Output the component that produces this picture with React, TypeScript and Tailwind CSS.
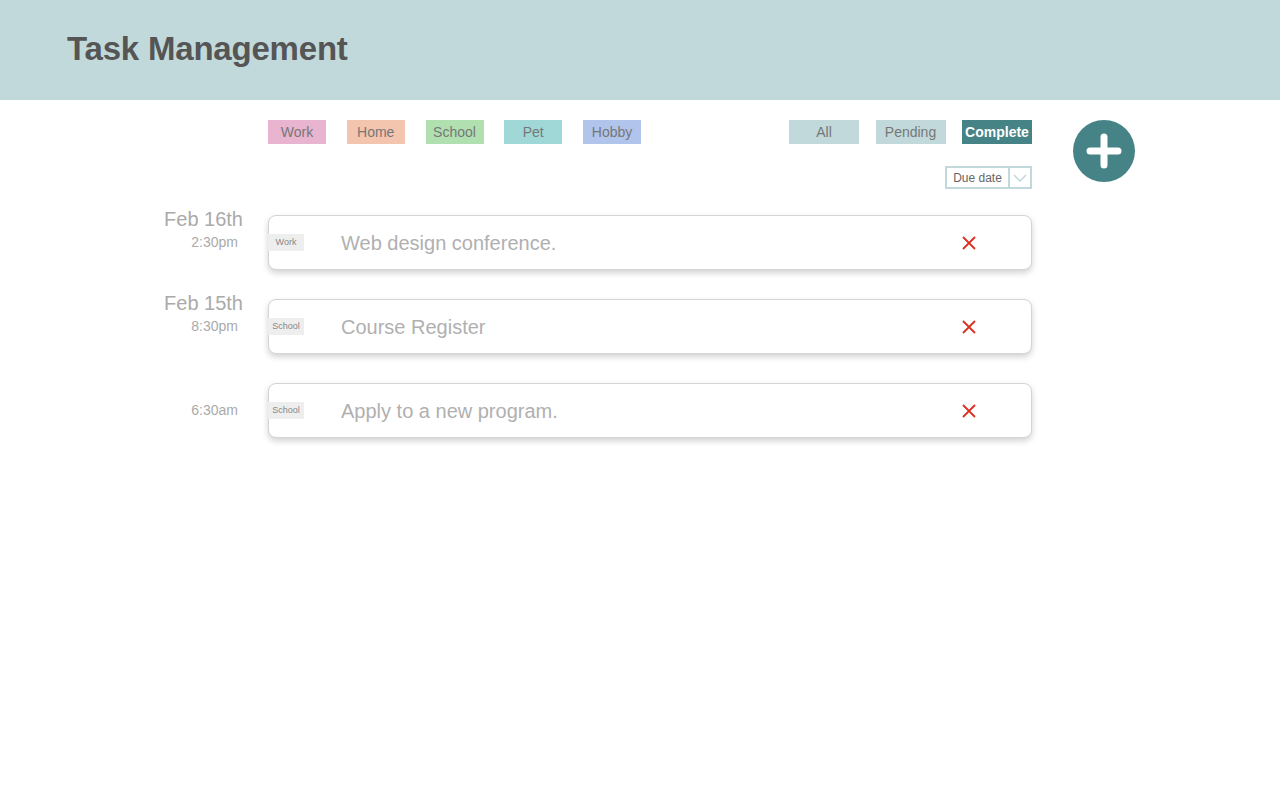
import React from "react";

const cats = [
  { name: "Work", bg: "bg-[#e8b4d0]" },
  { name: "Home", bg: "bg-[#f3c4ae]" },
  { name: "School", bg: "bg-[#b0dfb0]" },
  { name: "Pet", bg: "bg-[#a0d8d8]" },
  { name: "Hobby", bg: "bg-[#b0c4ec]" },
];

const tasks = [
  { date: "Feb 16th", time: "2:30pm", tag: "Work", title: "Web design conference." },
  { date: "Feb 15th", time: "8:30pm", tag: "School", title: "Course Register" },
  { date: "", time: "6:30am", tag: "School", title: "Apply to a new program." },
];

export default function App() {
  return (
    <div className="min-h-[800px] bg-white" style={{ fontFamily: '"Liberation Sans", Arial, sans-serif' }}>
      <header className="h-[100px] bg-[#c1d9da] flex items-center pl-[67px]">
        <h1 className="text-[33px] font-bold text-[#555555] tracking-[-0.2px] mt-[-2px]">Task Management</h1>
      </header>
      <div className="flex pt-[20px]">
        <div className="w-[268px] shrink-0" />
        <div className="w-[764px] shrink-0">
          <div className="flex justify-between">
            <div className="flex gap-[20.75px]">
              {cats.map((c) => (
                <div key={c.name} className={`${c.bg} w-[58px] h-[24px] flex items-center justify-center text-[14px] text-[#777777]`}>
                  {c.name}
                </div>
              ))}
            </div>
            <div className="flex gap-[16.5px]">
              <div className="bg-[#c1d9da] w-[70px] h-[24px] flex items-center justify-center text-[14px] text-[#777777]">All</div>
              <div className="bg-[#c1d9da] w-[70px] h-[24px] flex items-center justify-center text-[14px] text-[#777777]">Pending</div>
              <div className="bg-[#468386] w-[70px] h-[24px] flex items-center justify-center text-[14px] font-bold text-white">Complete</div>
            </div>
          </div>
          <div className="flex justify-end mt-[22px]">
            <div className="w-[87px] h-[23px] border-2 border-[#c1d9da] flex items-stretch">
              <div className="flex-1 flex items-center justify-center text-[12px] text-[#666666] border-r-2 border-[#c1d9da]">Due date</div>
              <div className="w-[20px] flex items-center justify-center">
                <svg width="14" height="8" viewBox="0 0 14 8"><path d="M1 1 L7 7 L13 1" stroke="#c1d9da" strokeWidth="1.5" fill="none" /></svg>
              </div>
            </div>
          </div>
        </div>
        <div className="ml-[41px]">
          <div className="w-[62px] h-[62px] rounded-full bg-[#468386] flex items-center justify-center">
            <svg width="38" height="38" viewBox="0 0 38 38">
              <path d="M19 5 V33 M5 19 H33" stroke="white" strokeWidth="7" strokeLinecap="round" />
            </svg>
          </div>
        </div>
      </div>
      <div className="flex flex-col gap-[29px] mt-[26px]">
        {tasks.map((t, i) => (
          <div key={i} className="flex">
            <div className="w-[243px] shrink-0 flex flex-col items-end text-[#aaaaaa]">
              <div className="text-[20px] leading-[22px] h-[22px] mt-[-7px]">{t.date}</div>
              <div className="text-[14px] leading-[16px] pr-[5px] mt-[4px]">{t.time}</div>
            </div>
            <div className="ml-[25px] w-[764px] h-[55px] rounded-[8px] border border-[#d4d4d4] shadow-[0_3px_6px_rgba(0,0,0,0.18)] bg-white flex items-center">
              <div className="w-[36px] h-[17px] bg-[#eeeeee] flex items-center justify-center text-[9px] text-[#888888] ml-[-1px]">{t.tag}</div>
              <div className="ml-[37px] text-[20px] text-[#b0b0b0] flex-1">{t.title}</div>
              <div className="mr-[55px]">
                <svg width="14" height="14" viewBox="0 0 14 14"><path d="M1 1 L13 13 M13 1 L1 13" stroke="#d93020" strokeWidth="1.8" /></svg>
              </div>
            </div>
          </div>
        ))}
      </div>
    </div>
  );
}
